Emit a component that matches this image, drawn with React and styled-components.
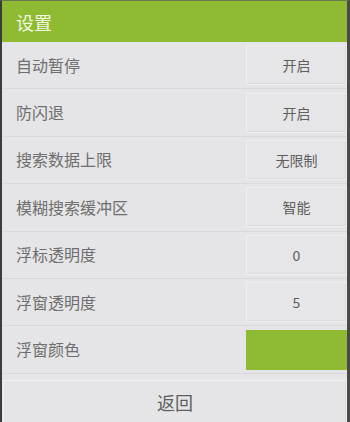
import React from "react";
import styled, { createGlobalStyle } from "styled-components";

const Global = createGlobalStyle`
  html, body { margin: 0; padding: 0; background: #e5e5e7; }
  body { font-family: "Noto Sans CJK SC", "Noto Sans", sans-serif; }
`;

const Frame = styled.div`
  width: 350px;
  height: 422px;
  box-sizing: border-box;
  overflow: hidden;
  background: #e5e5e7;
  border-left: 2px solid #3c3c3c;
  border-right: 3px solid #4a4a4a;
  border-top: 1px solid #6a7a50;
  display: flex;
  flex-direction: column;
`;

const Header = styled.div`
  height: 41px;
  flex: none;
  background: #8fbb33;
  color: #f2f8e2;
  font-size: 18px;
  display: flex;
  align-items: center;
  padding-left: 14px;
`;

const Row = styled.div`
  height: 47.4px;
  flex: none;
  box-sizing: border-box;
  display: grid;
  grid-template-columns: 1fr 101px;
  align-items: center;
  border-bottom: 1px solid #d9d9db;
`;

const Label = styled.div`
  font-size: 16px;
  color: #6e6e6e;
  padding-left: 14px;
  padding-bottom: 1px;
`;

const Value = styled.div`
  height: 40px;
  box-sizing: border-box;
  display: flex;
  align-items: center;
  justify-content: center;
  font-size: 14px;
  color: #5e5e5e;
  background: ${(p) => (p.$color ? p.$color : "#e6e6e8")};
  border: ${(p) => (p.$color ? "none" : "1px solid #efeff0")};
  box-shadow: ${(p) => (p.$color ? "none" : "inset -1px -1px 0 #dcdcde")};
`;

const Back = styled.div`
  margin: 6px 0 0 1px;
  height: 48px;
  flex: none;
  box-sizing: border-box;
  border: 1px solid #f0f0f1;
  box-shadow: inset -1px -1px 0 #dadadc;
  display: flex;
  align-items: center;
  justify-content: center;
  font-size: 18px;
  color: #5e5e5e;
  padding-bottom: 4px;
`;

const items = [
  ["自动暂停", "开启"],
  ["防闪退", "开启"],
  ["搜索数据上限", "无限制"],
  ["模糊搜索缓冲区", "智能"],
  ["浮标透明度", "0"],
  ["浮窗透明度", "5"],
];

export default function App() {
  return (
    <>
      <Global />
      <Frame>
        <Header>设置</Header>
        {items.map(([l, v]) => (
          <Row key={l}>
            <Label>{l}</Label>
            <Value>{v}</Value>
          </Row>
        ))}
        <Row>
          <Label>浮窗颜色</Label>
          <Value $color="#8fbb33" />
        </Row>
        <Back>返回</Back>
      </Frame>
    </>
  );
}
